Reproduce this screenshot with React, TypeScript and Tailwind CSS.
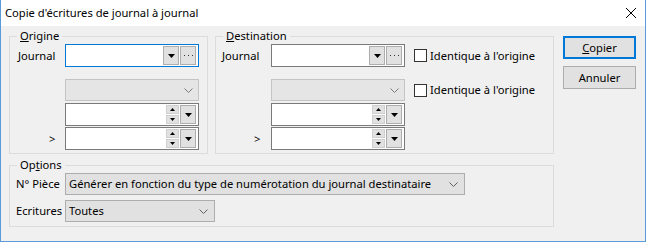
import React from "react";

// Petite boîte de dialogue Windows : copie d'écritures de journal à journal

function Arrow() {
  return (
    <svg width="7" height="4" viewBox="0 0 7 4">
      <path d="M0 0h7L3.5 4z" fill="#000" />
    </svg>
  );
}

function Chevron({ color = "#606060" }: { color?: string }) {
  return (
    <svg width="9" height="5" viewBox="0 0 9 5">
      <polyline points="0.5,0.5 4.5,4.5 8.5,0.5" fill="none" stroke={color} strokeWidth="1" />
    </svg>
  );
}

function DropBtn() {
  return (
    <div className="w-[16px] h-full border border-[#adadad] bg-[#e1e1e1] flex items-center justify-center">
      <Arrow />
    </div>
  );
}

function EllipsisBtn() {
  return (
    <div className="w-[16px] h-full border border-[#adadad] bg-[#e1e1e1] flex items-center justify-center">
      <svg width="9" height="2" viewBox="0 0 9 2">
        <rect x="0" y="0" width="1" height="1" fill="#333" />
        <rect x="4" y="0" width="1" height="1" fill="#333" />
        <rect x="8" y="0" width="1" height="1" fill="#333" />
      </svg>
    </div>
  );
}

function JournalInput({ focused }: { focused?: boolean }) {
  return (
    <div
      className={`w-[134px] h-[23px] bg-white border flex justify-end items-stretch gap-[1px] p-[1px] pr-[2px] ${
        focused ? "border-[#0078d7]" : "border-[#7a7a7a]"
      }`}
    >
      <DropBtn />
      <EllipsisBtn />
    </div>
  );
}

function DisabledCombo() {
  return (
    <div className="w-[134px] h-[22px] bg-[#e5e5e5] border border-[#c4c4c4] flex items-center justify-end pr-[5px]">
      <Chevron color="#7a7a7a" />
    </div>
  );
}

function SpinInput() {
  return (
    <div className="w-[134px] h-[23px] bg-white border border-[#7a7a7a] flex justify-end items-stretch gap-[1px] p-[1px] pr-[2px]">
      <div className="w-[13px] flex flex-col gap-[1px]">
        <div className="flex-1 bg-[#e1e1e1] border border-[#cfcfcf] flex items-center justify-center">
          <svg width="5" height="3" viewBox="0 0 5 3">
            <path d="M0 3h5L2.5 0z" fill="#000" />
          </svg>
        </div>
        <div className="flex-1 bg-[#e1e1e1] border border-[#cfcfcf] flex items-center justify-center">
          <svg width="5" height="3" viewBox="0 0 5 3">
            <path d="M0 0h5L2.5 3z" fill="#000" />
          </svg>
        </div>
      </div>
      <DropBtn />
    </div>
  );
}

function Combo({ value, width }: { value: string; width: string }) {
  return (
    <div
      className={`${width} h-[22px] bg-[#e1e1e1] border border-[#adadad] flex items-center justify-between pl-[3px] pr-[6px]`}
    >
      <span className="whitespace-nowrap overflow-hidden">{value}</span>
      <span className="shrink-0 flex">
        <Chevron />
      </span>
    </div>
  );
}

function CheckBox({ label }: { label: string }) {
  return (
    <div className="flex items-center gap-[3px] ml-[9px]">
      <div className="w-[13px] h-[13px] bg-white border border-[#333]" />
      <span className="whitespace-nowrap">{label}</span>
    </div>
  );
}

export default function App() {
  return (
    <div className="w-[646px] h-[242px] bg-[#f0f0f0] border-x border-b border-[#5b9bd9] text-[11.2px] leading-[16px] text-black font-['Segoe_UI','Noto_Sans',sans-serif] flex flex-col overflow-hidden">
      {/* Title bar */}
      <div className="h-[26px] bg-white flex items-center justify-between pl-[4px] pr-[9px] shrink-0">
        <span>Copie d'écritures de journal à journal</span>
        <svg width="10" height="10" viewBox="0 0 10 10">
          <path d="M0 0L10 10M10 0L0 10" stroke="#000" strokeWidth="1" />
        </svg>
      </div>

      <div className="flex flex-col pt-[2px] pl-[8px]">
        <div className="flex items-start">
          {/* Origine */}
          <fieldset className="w-[199px] border border-[#dcdcdc] pb-[3px]">
            <legend className="ml-[7px] px-[3px]">
              <u>O</u>rigine
            </legend>
            <div className="flex items-center">
              <div className="w-[55px] pl-[8px]">Journal</div>
              <JournalInput focused />
            </div>
            <div className="flex mt-[12px] h-[22px]">
              <div className="w-[55px]" />
              <DisabledCombo />
            </div>
            <div className="flex mt-[2px]">
              <div className="w-[55px]" />
              <SpinInput />
            </div>
            <div className="flex items-center mt-[1px]">
              <div className="w-[55px] pl-[39px]">&gt;</div>
              <SpinInput />
            </div>
          </fieldset>

          {/* Destination */}
          <fieldset className="w-[339px] ml-[7px] border border-[#dcdcdc] pb-[3px]">
            <legend className="ml-[7px] px-[3px]">
              <u>D</u>estination
            </legend>
            <div className="flex items-center">
              <div className="w-[55px] pl-[6px]">Journal</div>
              <JournalInput />
              <CheckBox label="Identique à l'origine" />
            </div>
            <div className="flex items-center mt-[12px] h-[22px]">
              <div className="w-[55px]" />
              <DisabledCombo />
              <CheckBox label="Identique à l'origine" />
            </div>
            <div className="flex mt-[2px]">
              <div className="w-[55px]" />
              <SpinInput />
            </div>
            <div className="flex items-center mt-[1px]">
              <div className="w-[55px] pl-[38px]">&gt;</div>
              <SpinInput />
            </div>
          </fieldset>

          {/* Buttons */}
          <div className="ml-[9px] mt-[8px] flex flex-col gap-[7px]">
            <button className="w-[73px] h-[23px] bg-[#e1e1e1] border-2 border-[#0078d7] flex items-center justify-center">
              <span>
                <u>C</u>opier
              </span>
            </button>
            <button className="w-[73px] h-[23px] bg-[#e1e1e1] border border-[#adadad] flex items-center justify-center">
              Annuler
            </button>
          </div>
        </div>

        {/* Options */}
        <fieldset className="w-[545px] mt-[3px] border border-[#dcdcdc] pb-[4px]">
          <legend className="ml-[7px] px-[3px]">
            Op<u>t</u>ions
          </legend>
          <div className="flex items-center">
            <div className="w-[55px] pl-[6px] whitespace-nowrap">N° Pièce</div>
            <Combo
              width="w-[400px]"
              value="Générer en fonction du type de numérotation du journal destinataire"
            />
          </div>
          <div className="flex items-center mt-[5px]">
            <div className="w-[55px] pl-[6px]">Ecritures</div>
            <Combo width="w-[150px]" value="Toutes" />
          </div>
        </fieldset>
      </div>
    </div>
  );
}
